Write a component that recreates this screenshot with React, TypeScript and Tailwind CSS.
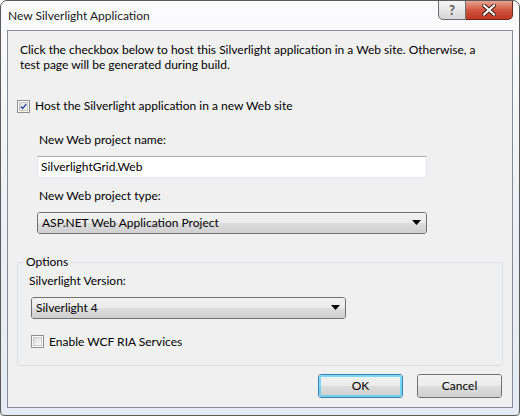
import React from "react";

const font = { fontFamily: 'Lato, "Noto Sans", Arial, sans-serif' };

function Check({ checked }: { checked?: boolean }) {
  return (
    <div className="w-[13px] h-[13px] border border-[#8e8f8f] bg-white p-[1px] shrink-0">
      <div className="w-full h-full bg-gradient-to-br from-[#dcdcdc] to-[#fbfbfb] border border-[#c8c8c8] flex items-center justify-center">
        {checked && (
          <svg width="9" height="9" viewBox="0 0 9 9">
            <path d="M1 4.5 L3.5 7 L8 1.5" fill="none" stroke="#31429c" strokeWidth="1.8" />
          </svg>
        )}
      </div>
    </div>
  );
}

function Combo({ text, w }: { text: string; w: string }) {
  return (
    <div className={`${w} h-[22px] rounded-[3px] border border-[#707070] relative overflow-hidden flex items-center`}>
      <div className="absolute inset-0 flex flex-col">
        <div className="h-1/2 bg-gradient-to-b from-[#f2f2f2] to-[#ebebeb]" />
        <div className="h-1/2 bg-gradient-to-b from-[#dddddd] to-[#cfcfcf]" />
      </div>
      <span className="relative pl-[4px] text-[12px] leading-none flex-1">{text}</span>
      <svg className="relative mr-[5px]" width="9" height="6" viewBox="0 0 9 6">
        <path d="M0 0 H9 L4.5 5 Z" fill="#000" />
      </svg>
    </div>
  );
}

function Btn({ text, focused }: { text: string; focused?: boolean }) {
  return (
    <div
      className={`w-[85px] h-[24px] rounded-[3px] border ${focused ? "border-[#3c7fb1]" : "border-[#707070]"} relative overflow-hidden flex items-center justify-center`}
    >
      <div className="absolute inset-0 flex flex-col">
        <div className="h-1/2 bg-gradient-to-b from-[#f2f2f2] to-[#ebebeb]" />
        <div className="h-1/2 bg-gradient-to-b from-[#dddddd] to-[#cfcfcf]" />
      </div>
      {focused && <div className="absolute inset-0 rounded-[2px] border-2 border-[#48d2f8]/70" />}
      <span className="relative text-[12px] leading-none">{text}</span>
    </div>
  );
}

export default function App() {
  return (
    <div
      style={font}
      className="w-[520px] h-[416px] relative bg-gradient-to-b from-[#fbfbfc] via-[#eef1f5] to-[#e4eaf2] border border-[#5a5a5a] rounded-t-[7px] rounded-b-[4px] text-black flex flex-col overflow-hidden"
    >
      <div className="h-[29px] flex items-start justify-between pl-[7px] shrink-0">
        <div className="text-[12px] leading-none pt-[9px] text-[#1b1b1b]">New Silverlight Application</div>
        <div className="flex mr-[6px] -mt-px">
          <div className="w-[28px] h-[20px] border border-[#6c6c6c] rounded-bl-[5px] bg-gradient-to-b from-[#f6f6f6] via-[#e6e6e6] to-[#d6d6d6] flex items-center justify-center text-[#555] text-[13px] font-bold leading-none">
            ?
          </div>
          <div className="w-[47px] h-[20px] border border-l-0 border-[#6b2a20] rounded-br-[5px] bg-gradient-to-b from-[#e8a493] via-[#d0553f] to-[#c0341f] flex items-center justify-center">
            <svg width="14" height="12" viewBox="0 0 14 12">
              <path d="M2 1.5 L12 10.5 M12 1.5 L2 10.5" stroke="#3a1a14" strokeWidth="4" strokeLinecap="square" />
              <path d="M2 1.5 L12 10.5 M12 1.5 L2 10.5" stroke="#fff" strokeWidth="2.2" strokeLinecap="square" />
            </svg>
          </div>
        </div>
      </div>

      <div className="mx-[6px] h-[378px] border border-[#858c95] bg-[#f0f0f0] flex flex-col shrink-0">
        <div className="pl-[12px] pt-[11px] pr-[20px] text-[12px] leading-[15px]">
          Click the checkbox below to host this Silverlight application in a Web site. Otherwise, a test page will be
          generated during build.
        </div>
        <div className="flex items-center gap-[5px] pl-[9px] mt-[27px] h-[14px]">
          <Check checked />
          <span className="text-[12px] leading-none">Host the Silverlight application in a new Web site</span>
        </div>
        <div className="pl-[31px] mt-[19px] text-[12px] leading-[15px]">New Web project name:</div>
        <div className="pl-[29px] mt-[9px]">
          <div className="w-[390px] h-[22px] bg-white border border-[#e3e9ef] border-t-[#abadb3] flex items-center pl-[3px] text-[12px]">
            SilverlightGrid.Web
          </div>
        </div>
        <div className="pl-[31px] mt-[10px] text-[12px] leading-[15px]">New Web project type:</div>
        <div className="pl-[29px] mt-[9px]">
          <Combo text="ASP.NET Web Application Project" w="w-[390px]" />
        </div>

        <div className="relative mx-[9px] mt-[28px] h-[104px] border border-[#d5dfe5] rounded-[3px] flex flex-col">
          <div className="absolute left-[6px] -top-[9px] px-[2px] bg-[#f0f0f0] text-[12px] leading-[15px]">Options</div>
          <div className="pl-[11px] pt-[10px] text-[12px] leading-[15px]">Silverlight Version:</div>
          <div className="pl-[13px] mt-[9px]">
            <Combo text="Silverlight 4" w="w-[315px]" />
          </div>
          <div className="flex items-center gap-[5px] pl-[13px] mt-[16px]">
            <Check />
            <span className="text-[12px] leading-none">Enable WCF RIA Services</span>
          </div>
        </div>

        <div className="flex justify-end gap-[14px] pr-[10px] mt-[8px]">
          <Btn text="OK" focused />
          <Btn text="Cancel" />
        </div>
      </div>
    </div>
  );
}
